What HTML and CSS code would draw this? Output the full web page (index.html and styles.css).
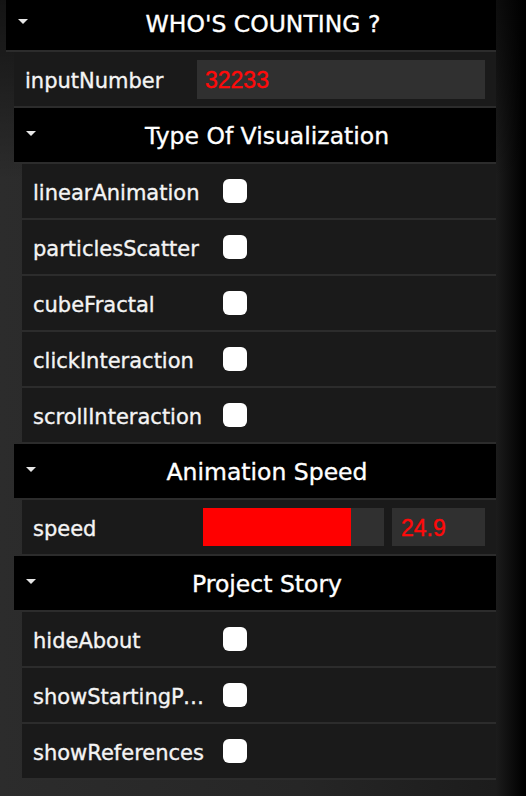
FILE: index.html
```html
<!DOCTYPE html>
<html>
<head>
<meta charset="utf-8">
<title>dat.GUI</title>
<link rel="stylesheet" href="styles.css">
</head>
<body>
<div class="gui">
  <section class="folder root">
    <div class="title"><span class="caret"></span><span class="title-text">WHO'S COUNTING ?</span></div>
    <ul class="children">
      <li class="row">
        <span class="label">inputNumber</span>
        <div class="control"><input class="num wide" type="text" value="32233"></div>
      </li>
      <li class="folder">
        <div class="title"><span class="caret"></span><span class="title-text">Type Of Visualization</span></div>
        <ul class="children">
          <li class="row"><span class="label">linearAnimation</span><div class="control"><input class="check" type="checkbox"></div></li>
          <li class="row"><span class="label">particlesScatter</span><div class="control"><input class="check" type="checkbox"></div></li>
          <li class="row"><span class="label">cubeFractal</span><div class="control"><input class="check" type="checkbox"></div></li>
          <li class="row"><span class="label">clickInteraction</span><div class="control"><input class="check" type="checkbox"></div></li>
          <li class="row"><span class="label">scrollInteraction</span><div class="control"><input class="check" type="checkbox"></div></li>
        </ul>
      </li>
      <li class="folder">
        <div class="title"><span class="caret"></span><span class="title-text">Animation Speed</span></div>
        <ul class="children">
          <li class="row">
            <span class="label">speed</span>
            <div class="control slider-control">
              <div class="slider"><div class="slider-fg" style="width: 82%"></div></div>
              <input class="num short" type="text" value="24.9">
            </div>
          </li>
        </ul>
      </li>
      <li class="folder">
        <div class="title"><span class="caret"></span><span class="title-text">Project Story</span></div>
        <ul class="children">
          <li class="row"><span class="label">hideAbout</span><div class="control"><input class="check" type="checkbox"></div></li>
          <li class="row"><span class="label">showStartingPoint</span><div class="control"><input class="check" type="checkbox"></div></li>
          <li class="row"><span class="label">showReferences</span><div class="control"><input class="check" type="checkbox"></div></li>
        </ul>
      </li>
    </ul>
  </section>
</div>
</body>
</html>
```

FILE: styles.css
```css
html, body {
  margin: 0;
  padding: 0;
}

body {
  width: 526px;
  height: 796px;
  overflow: hidden;
  font-family: "DejaVu Sans", "Liberation Sans", sans-serif;
  color: #eee;
  background:
    linear-gradient(to bottom, rgba(0,0,0,0.55) 0, rgba(0,0,0,0) 180px),
    linear-gradient(to right, #2c2c2c 0, #262626 300px, #1c1c1c 496px, #000 524px);
}

.gui {
  margin-left: 6px;
  width: 490px;
  margin-top: -4px;
}

ul {
  list-style: none;
  margin: 0;
  padding: 0;
}

.children {
  padding-left: 8px;
}

.title {
  height: 54px;
  background: #000;
  border-bottom: 2px solid #2c2c2c;
  display: flex;
  align-items: center;
  padding-left: 12px;
  color: #fff;
  font-size: 23.5px;
  -webkit-text-stroke: 0.35px #fff;
}

.caret {
  width: 0;
  height: 0;
  border-left: 5px solid transparent;
  border-right: 5px solid transparent;
  border-top: 5px solid #e6e6e6;
  margin-top: -3px;
}

.title-text {
  flex: 1;
  text-align: center;
  padding-left: 2px;
  padding-top: 1px;
  white-space: nowrap;
}

.row {
  height: 54px;
  background: #1a1a1a;
  border-bottom: 2px solid #2c2c2c;
  display: flex;
  align-items: center;
  padding: 0 11px;
}

.label {
  width: 172px;
  flex: none;
  font-size: 21px;
  color: #f4f4f4;
  -webkit-text-stroke: 0.35px #f4f4f4;
  padding-top: 3px;
  white-space: nowrap;
  overflow: hidden;
  text-overflow: ellipsis;
}

.control {
  flex: 1;
  display: flex;
  align-items: center;
}

.num {
  height: 38px;
  box-sizing: border-box;
  border: 0;
  outline: none;
  background: #303030;
  color: #ff0a0a;
  font-family: "Liberation Sans", Arial, sans-serif;
  font-size: 23px;
  -webkit-text-stroke: 0.4px #ff0a0a;
  padding: 2px 8px 0;
  margin: 0;
}

.wide {
  width: 100%;
  height: 39px;
}

.short {
  width: 93px;
  flex: none;
  padding-left: 9px;
}

.slider-control {
  margin-left: -2px;
  gap: 8px;
}

.slider {
  flex: 1;
  height: 38px;
  background: #303030;
}

.slider-fg {
  height: 100%;
  background: #ff0000;
}

.check {
  appearance: none;
  -webkit-appearance: none;
  width: 24px;
  height: 24px;
  margin: 0 0 0 18px;
  background: #fff;
  border-radius: 6px;
  border: 0;
}
```
